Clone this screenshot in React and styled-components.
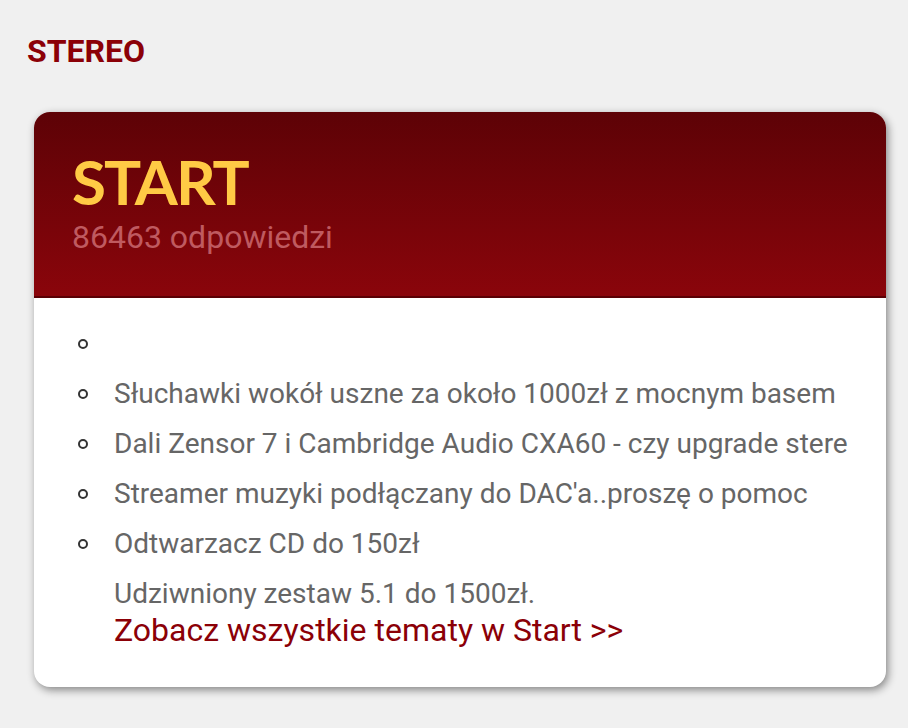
import React from "react";
import styled, { createGlobalStyle } from "styled-components";

const GlobalStyle = createGlobalStyle`
  body {
    margin: 0;
    background-color: #f0f0f0;
    font-family: Roboto, "Liberation Sans", sans-serif;
  }
`;

const Page = styled.div`
  padding: 33px 22px 40px 27px;
`;

const SectionTitle = styled.h2`
  margin: 0 0 42px;
  font-size: 32px;
  line-height: 37px;
  font-weight: 700;
  color: #8b0007;
`;

const Card = styled.div`
  margin-left: 7px;
  background-color: #fff;
  border-radius: 16px;
  overflow: hidden;
  box-shadow: 2px 3px 8px rgba(0, 0, 0, 0.45);
`;

const CardHeader = styled.div`
  padding: 38px 38px 40px;
  background: linear-gradient(to bottom, #5d0206, #8a050b);
  border-bottom: 2px solid #5a0004;
`;

const Title = styled.h3`
  margin: 0 0 6px;
  font-family: Lato, "Open Sans", sans-serif;
  font-size: 62px;
  line-height: 62px;
  font-weight: 700;
  letter-spacing: -2px;
  color: #ffca45;
`;

const Count = styled.div`
  font-size: 32px;
  line-height: 38px;
  color: #bf5a60;
`;

const CardBody = styled.div`
  padding: 27px 38px 38px 44px;
`;

const TopicList = styled.ul`
  margin: 0;
  padding: 0;
  list-style: none;
`;

const TopicItem = styled.li`
  display: flex;
  align-items: center;
  gap: 26px;
  min-height: 37px;
  margin-bottom: 13px;
  font-size: 28px;
  line-height: 37px;
  color: #666;
  white-space: nowrap;

  &::before {
    content: "";
    flex: none;
    width: 6px;
    height: 6px;
    border: 2px solid #333;
    border-radius: 50%;
    visibility: ${(p) => (p.$bullet ? "visible" : "hidden")};
  }
`;

const MoreLink = styled.a`
  display: block;
  margin-top: -13px;
  padding-left: 36px;
  font-size: 32px;
  line-height: 37px;
  color: #8b0007;
  text-decoration: none;
`;

const topics = [
  { text: "", bullet: true },
  { text: "Słuchawki wokół uszne za około 1000zł z mocnym basem", bullet: true },
  { text: "Dali Zensor 7 i Cambridge Audio CXA60 - czy upgrade stere", bullet: true },
  { text: "Streamer muzyki podłączany do DAC'a..proszę o pomoc", bullet: true },
  { text: "Odtwarzacz CD do 150zł", bullet: true },
  { text: "Udziwniony zestaw 5.1 do 1500zł.", bullet: false },
];

export default function App() {
  return (
    <Page>
      <GlobalStyle />
      <SectionTitle>STEREO</SectionTitle>
      <Card>
        <CardHeader>
          <Title>START</Title>
          <Count>86463 odpowiedzi</Count>
        </CardHeader>
        <CardBody>
          <TopicList>
            {topics.map((t, i) => (
              <TopicItem key={i} $bullet={t.bullet}>
                {t.text}
              </TopicItem>
            ))}
          </TopicList>
          <MoreLink href="#">Zobacz wszystkie tematy w Start &gt;&gt;</MoreLink>
        </CardBody>
      </Card>
    </Page>
  );
}
